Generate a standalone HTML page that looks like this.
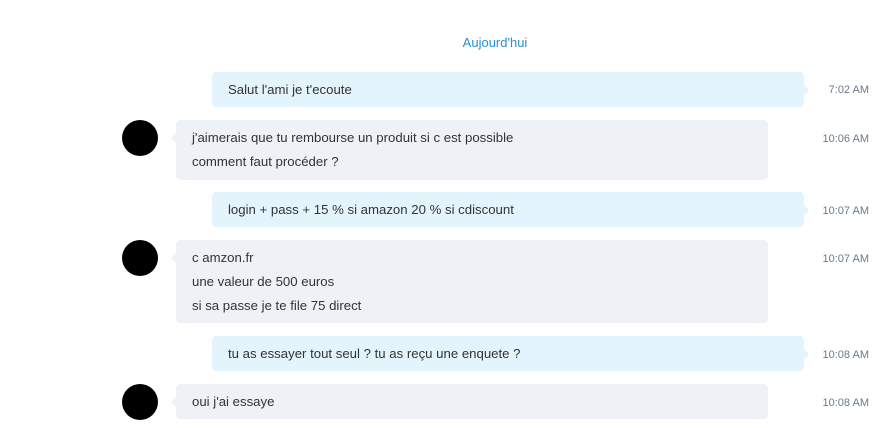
<!DOCTYPE html>
<html><head><meta charset="utf-8"><style>
body{margin:0;width:893px;height:428px;background:#fff;font-family:"Liberation Sans",sans-serif;position:relative;overflow:hidden}
.day{position:absolute;left:0;width:990px;top:35px;text-align:center;font-size:13px;color:#2b8fd0}
.b{position:absolute;font-size:13.2px;color:#333;line-height:24px;padding:6px 0 5px 16px;box-sizing:border-box;border-radius:4px}
.o{left:212px;width:592px;background:#e3f4fc}
.o:after{content:"";position:absolute;right:-5px;top:50%;margin-top:-5px;border-left:5px solid #e3f4fc;border-top:5px solid transparent;border-bottom:5px solid transparent}
.i{left:176px;width:592px;background:#eef1f6}
.i:before{content:"";position:absolute;left:-5px;top:13px;border-right:5px solid #eef1f6;border-top:5px solid transparent;border-bottom:5px solid transparent}
.av{position:absolute;left:122px;width:36px;height:36px;border-radius:50%;background:#000}
.t{position:absolute;right:24px;font-size:11px;color:#6b7a8a}
</style></head><body>
<div class="day">Aujourd'hui</div>
<div class="b o" style="top:72px;height:35px">Salut l'ami je t'ecoute</div>
<div class="t" style="top:84px">7:02 AM</div>
<div class="av" style="top:120px"></div>
<div class="b i" style="top:120px;height:60px">j'aimerais que tu rembourse un produit si c est possible<br>comment faut procéder ?</div>
<div class="t" style="top:133px">10:06 AM</div>
<div class="b o" style="top:192px;height:35px">login + pass + 15 % si amazon 20 % si cdiscount</div>
<div class="t" style="top:205px">10:07 AM</div>
<div class="av" style="top:240px"></div>
<div class="b i" style="top:240px;height:83px">c amzon.fr<br>une valeur de 500 euros<br>si sa passe je te file 75 direct</div>
<div class="t" style="top:253px">10:07 AM</div>
<div class="b o" style="top:336px;height:35px">tu as essayer tout seul ? tu as reçu une enquete ?</div>
<div class="t" style="top:349px">10:08 AM</div>
<div class="av" style="top:384px"></div>
<div class="b i" style="top:384px;height:35px">oui j'ai essaye</div>
<div class="t" style="top:397px">10:08 AM</div>
</body></html>
